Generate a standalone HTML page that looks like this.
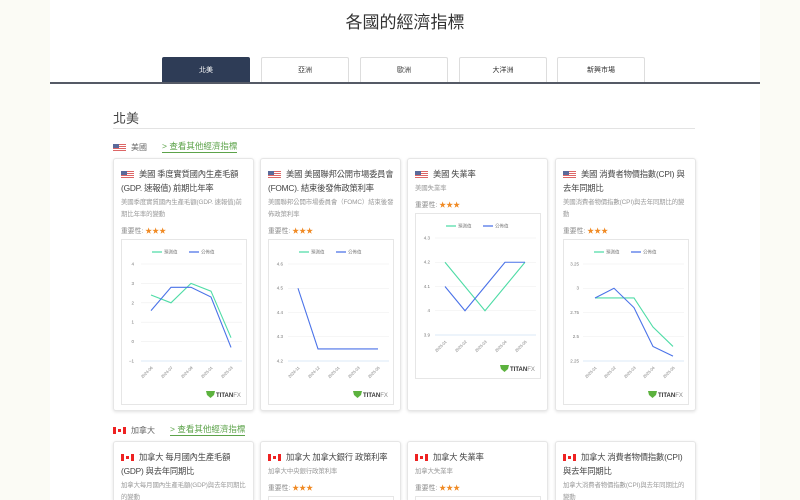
<!DOCTYPE html>
<html style="width:800px;height:500px;overflow:hidden"><head><meta charset="utf-8"><style>
*{margin:0;padding:0;box-sizing:border-box}
body{width:800px;height:500px;overflow:hidden;background:#fbfbf5;font-family:"Liberation Sans","Noto Sans CJK TC",sans-serif;color:#444;position:relative}
.wrap{position:absolute;left:0;top:0;width:800px;height:500px;overflow:hidden}
.main{position:absolute;left:50px;top:0;width:710px;height:500px;background:#fff}
.abs{position:absolute}
h1{position:absolute;left:0;width:810px;top:8px;text-align:center;font-size:17px;font-weight:normal;color:#333}
.tab{position:absolute;top:57px;height:26px;width:88px;border:1px solid #ddd;border-bottom:none;border-radius:2px 2px 0 0;font-size:7px;text-align:center;line-height:25px;color:#333;background:#fff}
.tab.on{background:#2e3c56;color:#fff;border-color:#2e3c56}
.line{position:absolute;left:50px;top:82px;width:710px;height:1.5px;background:#555a66}
.card{position:absolute;width:141px;border:1px solid #e6e6e6;border-radius:3px;box-shadow:0 1px 3px rgba(0,0,0,.12);background:#fff;padding:8px 6px 8px 7px;overflow:hidden}
.bot{height:59px;border-bottom:none;border-radius:3px 3px 0 0}
.t{font-size:8.3px;line-height:14px;color:#444;letter-spacing:-.2px}
.d{font-size:6.4px;line-height:12px;color:#999;margin-top:2px;letter-spacing:-.1px}
.i{font-size:6.8px;color:#888;margin-top:4px}
.i b{color:#f08a24;font-weight:normal;font-size:7px}
.fl{display:inline-block;width:13px;height:7px;vertical-align:-1px;margin-right:5px}
.us{background:repeating-linear-gradient(#d66 0 1px,#fff 1px 2px);position:relative}
.us:before{content:"";position:absolute;left:0;top:0;width:6px;height:4px;background:#5a6a9a}
.ca{background:linear-gradient(90deg,#e22 0 3px,#fff 3px 10px,#e22 10px);position:relative}
.ca:before{content:"";position:absolute;left:5px;top:2px;width:3px;height:3px;background:#e22}
.chart{margin-top:6px;border:1px solid #e6e6e6;width:126px;height:166px}
svg text{font-family:"Liberation Sans","Noto Sans CJK TC",sans-serif}
</style></head><body><div class="wrap">
<div class="main"></div>
<h1>各國的經濟指標</h1>
<div class="tab on" style="left:162px">北美</div>
<div class="tab" style="left:261px">亞洲</div>
<div class="tab" style="left:360px">歐洲</div>
<div class="tab" style="left:459px">大洋洲</div>
<div class="tab" style="left:557px">新興市場</div>
<div class="line"></div>
<div class="abs" style="left:113px;top:108px;font-size:13px;color:#444">北美</div>
<div class="abs" style="left:113px;top:128px;width:582px;height:1px;background:#e3e3e3"></div>
<div class="abs" style="left:113px;top:142px;font-size:8px;color:#666"><span class="fl us"></span>美國</div>
<div class="abs" style="left:162px;top:141px;font-size:8.5px;color:#5ca34a;border-bottom:1px solid #5ca34a;line-height:11px">&gt; 查看其他經濟指標</div>

<div class="card" style="left:113px;top:158px;height:253px">
<div class="t"><span class="fl us"></span>美國 季度實質國內生產毛額(GDP. 速報值) 前期比年率</div>
<div class="d">美國季度實質國內生產毛額(GDP. 速報值)前期比年率的變動</div>
<div class="i">重要性: <b>★★★</b></div>
<div class="chart" style="margin-top:3px"><svg width="126" height="166" font-size="4.5" fill="#777">
<g stroke="#eee" stroke-width=".6"><line x1="19" x2="120" y1="24" y2="24"/><line x1="19" x2="120" y1="43.4" y2="43.4"/><line x1="19" x2="120" y1="62.8" y2="62.8"/><line x1="19" x2="120" y1="82.2" y2="82.2"/><line x1="19" x2="120" y1="101.6" y2="101.6"/></g>
<line x1="19" x2="120" y1="121" y2="121" stroke="#cfe0f5" stroke-width=".8"/>
<g text-anchor="end"><text x="12" y="25.5">4</text><text x="12" y="45">3</text><text x="12" y="64.3">2</text><text x="12" y="83.7">1</text><text x="12" y="103">0</text><text x="12" y="122.5">−1</text></g>
<g stroke-width="1.2"><line x1="30" x2="40" y1="12" y2="12" stroke="#4fdca6"/><line x1="67" x2="77" y1="12" y2="12" stroke="#4a72e8"/></g>
<text x="42" y="13.5">預測值</text><text x="79" y="13.5">公佈值</text>
<polyline fill="none" stroke="#4fdca6" stroke-width="1.1" points="29,55 49,62.8 69,43.4 89,51.2 109,97.7"/>
<polyline fill="none" stroke="#4a72e8" stroke-width="1.1" points="29,70.6 49,47.3 69,47.3 89,57 109,107.4"/>
<g font-size="4"><text transform="translate(31,128) rotate(-45)" text-anchor="end">2024-06</text><text transform="translate(51,128) rotate(-45)" text-anchor="end">2024-07</text><text transform="translate(71,128) rotate(-45)" text-anchor="end">2024-09</text><text transform="translate(91,128) rotate(-45)" text-anchor="end">2025-01</text><text transform="translate(111,128) rotate(-45)" text-anchor="end">2025-03</text></g>
<path d="M84 151h9l-1 4-3.5 3-3.5-3z" fill="#5cb23e"/><text x="94" y="157" font-size="6" font-weight="bold" fill="#333">TITAN<tspan fill="#888" font-weight="normal">FX</tspan></text>
</svg></div></div>

<div class="card" style="left:260px;top:158px;height:253px">
<div class="t"><span class="fl us"></span>美國 美國聯邦公開市場委員會 (FOMC). 結束後發佈政策利率</div>
<div class="d">美國聯邦公開市場委員會（FOMC）結束後發佈政策利率</div>
<div class="i">重要性: <b>★★★</b></div>
<div class="chart" style="margin-top:3px"><svg width="126" height="166" font-size="4.5" fill="#777">
<g stroke="#eee" stroke-width=".6"><line x1="19" x2="120" y1="24" y2="24"/><line x1="19" x2="120" y1="48.25" y2="48.25"/><line x1="19" x2="120" y1="72.5" y2="72.5"/><line x1="19" x2="120" y1="96.75" y2="96.75"/></g>
<line x1="19" x2="120" y1="121" y2="121" stroke="#cfe0f5" stroke-width=".8"/>
<g text-anchor="end"><text x="14" y="25.5">4.6</text><text x="14" y="49.7">4.5</text><text x="14" y="74">4.4</text><text x="14" y="98.2">4.3</text><text x="14" y="122.5">4.2</text></g>
<g stroke-width="1.2"><line x1="30" x2="40" y1="12" y2="12" stroke="#4fdca6"/><line x1="67" x2="77" y1="12" y2="12" stroke="#4a72e8"/></g>
<text x="42" y="13.5">預測值</text><text x="79" y="13.5">公佈值</text>
<polyline fill="none" stroke="#4a72e8" stroke-width="1.1" points="29,48.25 49,108.9 69,108.9 89,108.9 109,108.9"/>
<g font-size="4"><text transform="translate(31,128) rotate(-45)" text-anchor="end">2024-11</text><text transform="translate(51,128) rotate(-45)" text-anchor="end">2024-12</text><text transform="translate(71,128) rotate(-45)" text-anchor="end">2025-01</text><text transform="translate(91,128) rotate(-45)" text-anchor="end">2025-03</text><text transform="translate(111,128) rotate(-45)" text-anchor="end">2025-05</text></g>
<path d="M84 151h9l-1 4-3.5 3-3.5-3z" fill="#5cb23e"/><text x="94" y="157" font-size="6" font-weight="bold" fill="#333">TITAN<tspan fill="#888" font-weight="normal">FX</tspan></text>
</svg></div></div>

<div class="card" style="left:407px;top:158px;height:253px">
<div class="t"><span class="fl us"></span>美國 失業率</div>
<div class="d">美國失業率</div>
<div class="i">重要性: <b>★★★</b></div>
<div class="chart" style="margin-top:3px"><svg width="126" height="166" font-size="4.5" fill="#777">
<g stroke="#eee" stroke-width=".6"><line x1="19" x2="120" y1="24" y2="24"/><line x1="19" x2="120" y1="48.25" y2="48.25"/><line x1="19" x2="120" y1="72.5" y2="72.5"/><line x1="19" x2="120" y1="96.75" y2="96.75"/></g>
<line x1="19" x2="120" y1="121" y2="121" stroke="#cfe0f5" stroke-width=".8"/>
<g text-anchor="end"><text x="14" y="25.5">4.3</text><text x="14" y="49.7">4.2</text><text x="14" y="74">4.1</text><text x="14" y="98.2">4</text><text x="14" y="122.5">3.9</text></g>
<g stroke-width="1.2"><line x1="30" x2="40" y1="12" y2="12" stroke="#4fdca6"/><line x1="67" x2="77" y1="12" y2="12" stroke="#4a72e8"/></g>
<text x="42" y="13.5">預測值</text><text x="79" y="13.5">公佈值</text>
<polyline fill="none" stroke="#4fdca6" stroke-width="1.1" points="29,48.25 49,72.5 69,96.75 89,72.5 109,48.25"/>
<polyline fill="none" stroke="#4a72e8" stroke-width="1.1" points="29,72.5 49,96.75 69,72.5 89,48.25 109,48.25"/>
<g font-size="4"><text transform="translate(31,128) rotate(-45)" text-anchor="end">2025-01</text><text transform="translate(51,128) rotate(-45)" text-anchor="end">2025-02</text><text transform="translate(71,128) rotate(-45)" text-anchor="end">2025-03</text><text transform="translate(91,128) rotate(-45)" text-anchor="end">2025-04</text><text transform="translate(111,128) rotate(-45)" text-anchor="end">2025-05</text></g>
<path d="M84 151h9l-1 4-3.5 3-3.5-3z" fill="#5cb23e"/><text x="94" y="157" font-size="6" font-weight="bold" fill="#333">TITAN<tspan fill="#888" font-weight="normal">FX</tspan></text>
</svg></div></div>

<div class="card" style="left:555px;top:158px;height:253px">
<div class="t"><span class="fl us"></span>美國 消費者物價指數(CPI) 與去年同期比</div>
<div class="d">美國消費者物價指數(CPI)與去年同期比的變動</div>
<div class="i">重要性: <b>★★★</b></div>
<div class="chart" style="margin-top:3px"><svg width="126" height="166" font-size="4.5" fill="#777">
<g stroke="#eee" stroke-width=".6"><line x1="19" x2="120" y1="24" y2="24"/><line x1="19" x2="120" y1="48.25" y2="48.25"/><line x1="19" x2="120" y1="72.5" y2="72.5"/><line x1="19" x2="120" y1="96.75" y2="96.75"/></g>
<line x1="19" x2="120" y1="121" y2="121" stroke="#cfe0f5" stroke-width=".8"/>
<g text-anchor="end"><text x="15" y="25.5">3.25</text><text x="15" y="49.7">3</text><text x="15" y="74">2.75</text><text x="15" y="98.2">2.5</text><text x="15" y="122.5">2.25</text></g>
<g stroke-width="1.2"><line x1="30" x2="40" y1="12" y2="12" stroke="#4fdca6"/><line x1="67" x2="77" y1="12" y2="12" stroke="#4a72e8"/></g>
<text x="42" y="13.5">預測值</text><text x="79" y="13.5">公佈值</text>
<polyline fill="none" stroke="#4fdca6" stroke-width="1.1" points="31,57.95 50,57.95 70,57.95 89,87.05 109,106.45"/>
<polyline fill="none" stroke="#4a72e8" stroke-width="1.1" points="31,57.95 50,48.25 70,67.65 89,106.45 109,116.15"/>
<g font-size="4"><text transform="translate(33,128) rotate(-45)" text-anchor="end">2025-01</text><text transform="translate(52,128) rotate(-45)" text-anchor="end">2025-02</text><text transform="translate(72,128) rotate(-45)" text-anchor="end">2025-03</text><text transform="translate(91,128) rotate(-45)" text-anchor="end">2025-04</text><text transform="translate(111,128) rotate(-45)" text-anchor="end">2025-05</text></g>
<path d="M84 151h9l-1 4-3.5 3-3.5-3z" fill="#5cb23e"/><text x="94" y="157" font-size="6" font-weight="bold" fill="#333">TITAN<tspan fill="#888" font-weight="normal">FX</tspan></text>
</svg></div></div>

<div class="abs" style="left:113px;top:425px;font-size:8px;color:#666"><span class="fl ca"></span>加拿大</div>
<div class="abs" style="left:170px;top:424px;font-size:8.5px;color:#5ca34a;border-bottom:1px solid #5ca34a;line-height:11px">&gt; 查看其他經濟指標</div>

<div class="card bot" style="left:113px;top:441px">
<div class="t"><span class="fl ca"></span>加拿大 每月國內生產毛額(GDP) 與去年同期比</div>
<div class="d">加拿大每月國內生產毛額(GDP)與去年同期比的變動</div>
</div>
<div class="card bot" style="left:260px;top:441px">
<div class="t"><span class="fl ca"></span>加拿大 加拿大銀行 政策利率</div>
<div class="d">加拿大中央銀行政策利率</div>
<div class="i">重要性: <b>★★★</b></div>
<div class="chart" style="margin-top:3px"></div>
</div>
<div class="card bot" style="left:407px;top:441px">
<div class="t"><span class="fl ca"></span>加拿大 失業率</div>
<div class="d">加拿大失業率</div>
<div class="i">重要性: <b>★★★</b></div>
<div class="chart" style="margin-top:3px"></div>
</div>
<div class="card bot" style="left:555px;top:441px">
<div class="t"><span class="fl ca"></span>加拿大 消費者物價指數(CPI) 與去年同期比</div>
<div class="d">加拿大消費者物價指數(CPI)與去年同期比的變動</div>
</div>
</div></body></html>
